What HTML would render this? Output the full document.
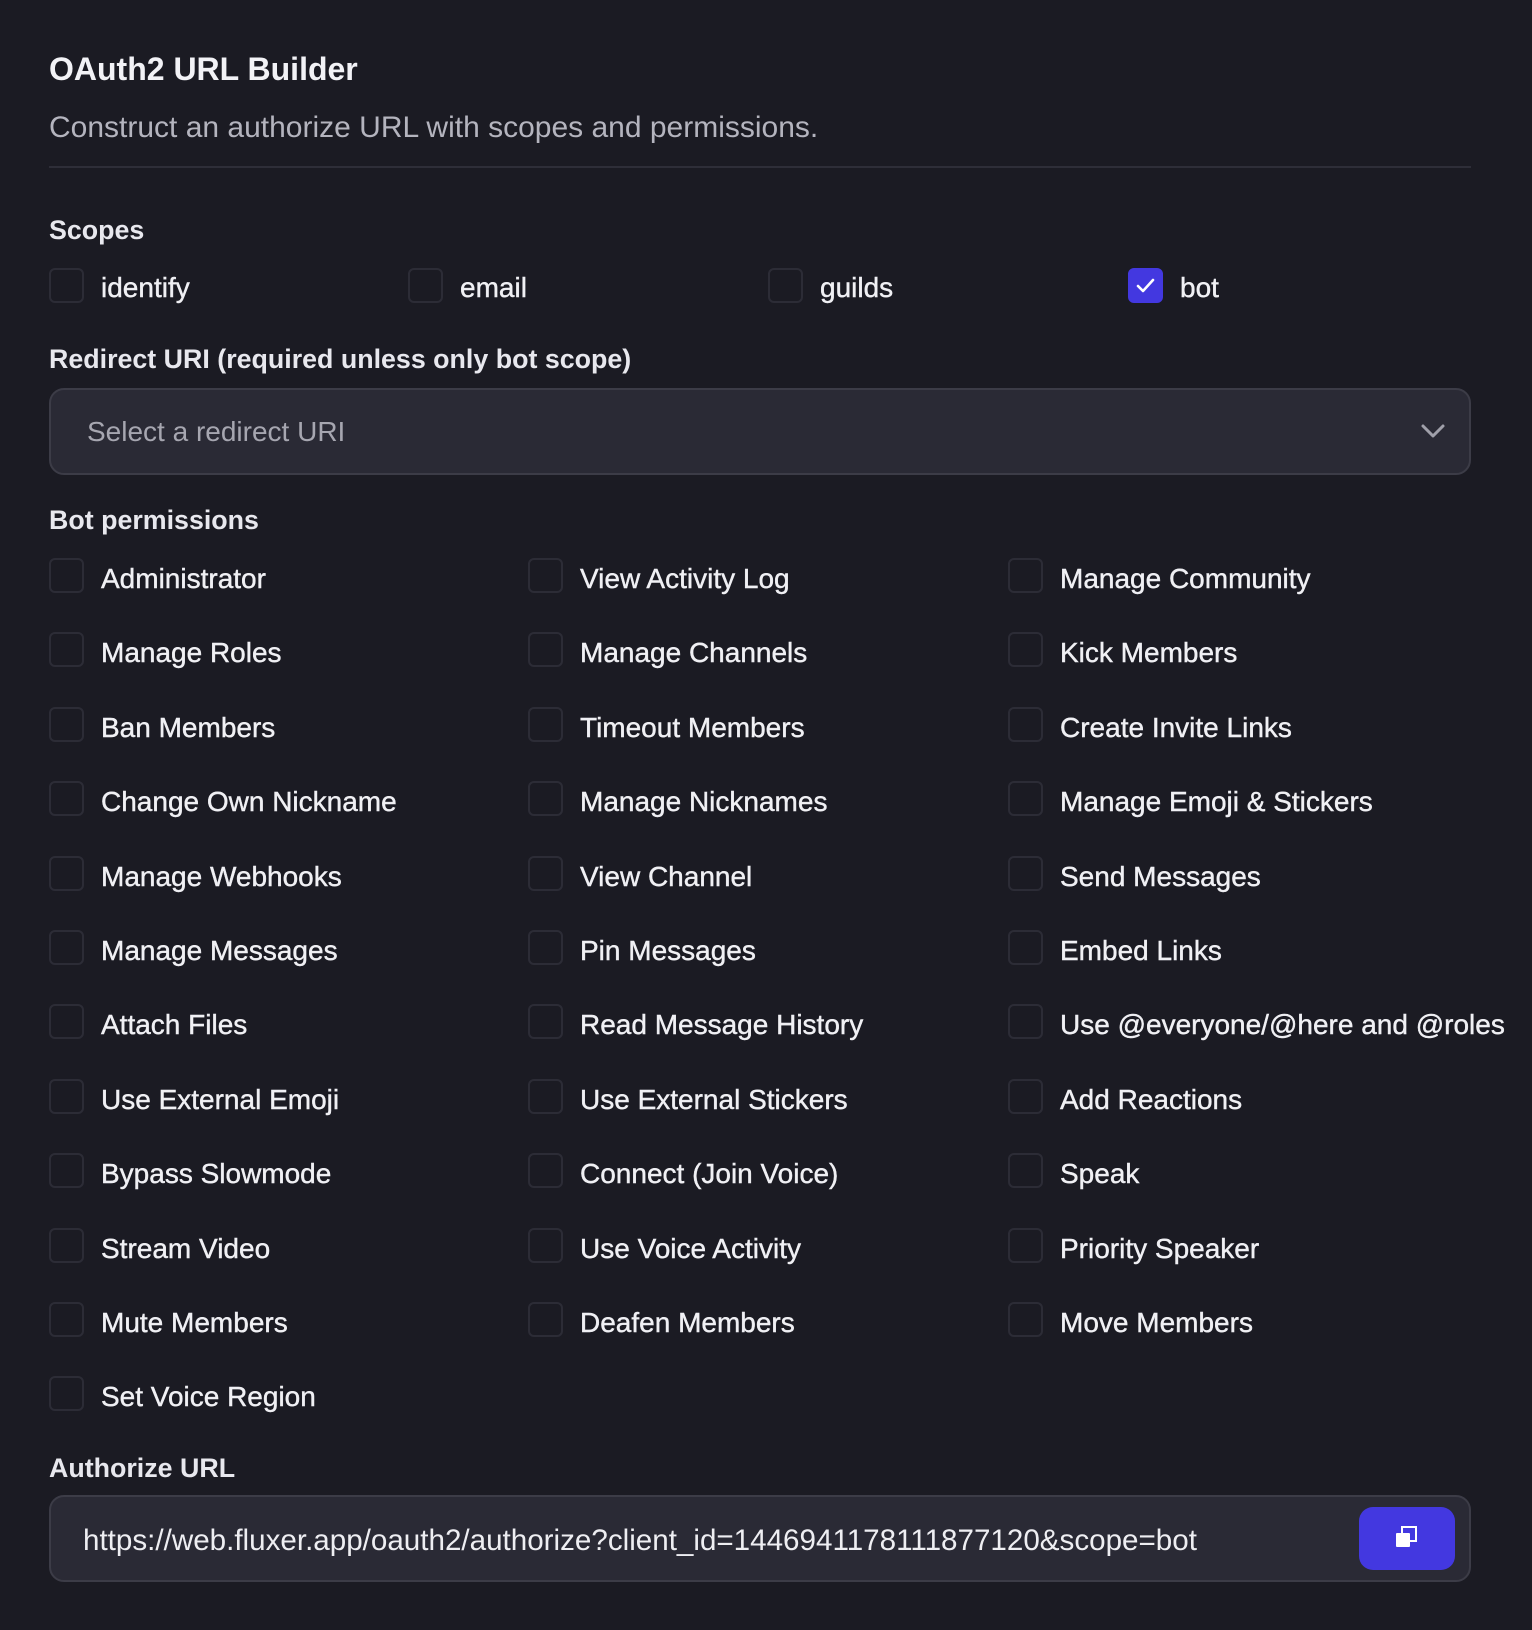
<!DOCTYPE html>
<html><head><meta charset="utf-8"><style>
*{margin:0;padding:0;box-sizing:border-box}
body{width:1532px;height:1630px;background:#1b1b23;font-family:"Liberation Sans",sans-serif;color:#eeeef2;position:relative;overflow:hidden}
.a{position:absolute;white-space:nowrap}
.t{left:49px;top:51px;font-size:32px;font-weight:bold;color:#f2f2f6}
.s{left:49px;top:111px;font-size:30px;color:#b4b4be}
.hr{left:49px;top:166px;width:1422px;height:2px;background:#2e2e38}
.lab{font-size:26.8px;font-weight:bold;color:#e8e8ee}
.cb{position:absolute;width:35px;height:35px;border:2px solid #2c2c36;border-radius:6px}
.on{background:#4338e0;border-color:#4338e0}
.it{font-size:28px;color:#f0f0f4;-webkit-text-stroke:0.4px #f0f0f4}
.box{position:absolute;left:49px;width:1422px;height:87px;background:#2a2a35;border:2px solid #3c3c47;border-radius:15px}
</style></head><body>
<div class="a t">OAuth2 URL Builder</div>
<div class="a s">Construct an authorize URL with scopes and permissions.</div>
<div class="a hr"></div>
<div class="a lab" style="left:49px;top:215px">Scopes</div>

<div class="cb" style="left:49px;top:268px"></div><div class="a it" style="left:101px;top:272px">identify</div>
<div class="cb" style="left:408px;top:268px"></div><div class="a it" style="left:460px;top:272px">email</div>
<div class="cb" style="left:768px;top:268px"></div><div class="a it" style="left:820px;top:272px">guilds</div>
<div class="cb on" style="left:1128px;top:268px"><svg width="31" height="31" viewBox="0 0 31 31" style="position:absolute;left:0;top:0"><path d="M8 16l5 5 10-11" fill="none" stroke="#fff" stroke-width="2.6" stroke-linecap="round" stroke-linejoin="round"/></svg></div><div class="a it" style="left:1180px;top:272px">bot</div>

<div class="a lab" style="left:49px;top:344px">Redirect URI (required unless only bot scope)</div>
<div class="box" style="top:388px"></div>
<div class="a" style="left:87px;top:416px;font-size:28px;color:#a6a6b0">Select a redirect URI</div>
<svg class="a" style="left:1420px;top:421px" width="26" height="20" viewBox="0 0 26 20"><path d="M3 5l10 10 10-10" fill="none" stroke="#a0a0aa" stroke-width="3" stroke-linecap="round" stroke-linejoin="round"/></svg>

<div class="a lab" style="left:49px;top:505px">Bot permissions</div>

<div id="g"></div>

<div class="a lab" style="left:49px;top:1453px">Authorize URL</div>
<div class="box" style="top:1495px"></div>
<div class="a" style="left:83px;top:1524px;font-size:29.6px;color:#eeeef2">https://web.fluxer.app/oauth2/authorize?client_id=1446941178111877120&amp;scope=bot</div>
<div class="a" style="left:1359px;top:1507px;width:96px;height:63px;background:#4338e0;border-radius:14px"></div>
<svg class="a" style="left:1392px;top:1524px" width="30" height="30" viewBox="0 0 30 30"><rect x="10" y="3" width="14" height="14" fill="none" stroke="#fff" stroke-width="2"/><rect x="4" y="9" width="14" height="14" rx="1" fill="#fff"/></svg>

<script>
var L=[["Administrator","View Activity Log","Manage Community"],["Manage Roles","Manage Channels","Kick Members"],["Ban Members","Timeout Members","Create Invite Links"],["Change Own Nickname","Manage Nicknames","Manage Emoji & Stickers"],["Manage Webhooks","View Channel","Send Messages"],["Manage Messages","Pin Messages","Embed Links"],["Attach Files","Read Message History","Use @everyone/@here and @roles"],["Use External Emoji","Use External Stickers","Add Reactions"],["Bypass Slowmode","Connect (Join Voice)","Speak"],["Stream Video","Use Voice Activity","Priority Speaker"],["Mute Members","Deafen Members","Move Members"],["Set Voice Region"]];
var X=[49,528,1008],h="";
L.forEach(function(r,i){var y=558+i*74.4;r.forEach(function(t,j){h+='<div class="cb" style="left:'+X[j]+'px;top:'+y+'px"></div><div class="a it" style="left:'+(X[j]+52)+'px;top:'+(y+5)+'px">'+t.replace("&","&amp;")+'</div>';});});
document.getElementById("g").innerHTML=h;
</script>
</body></html>
